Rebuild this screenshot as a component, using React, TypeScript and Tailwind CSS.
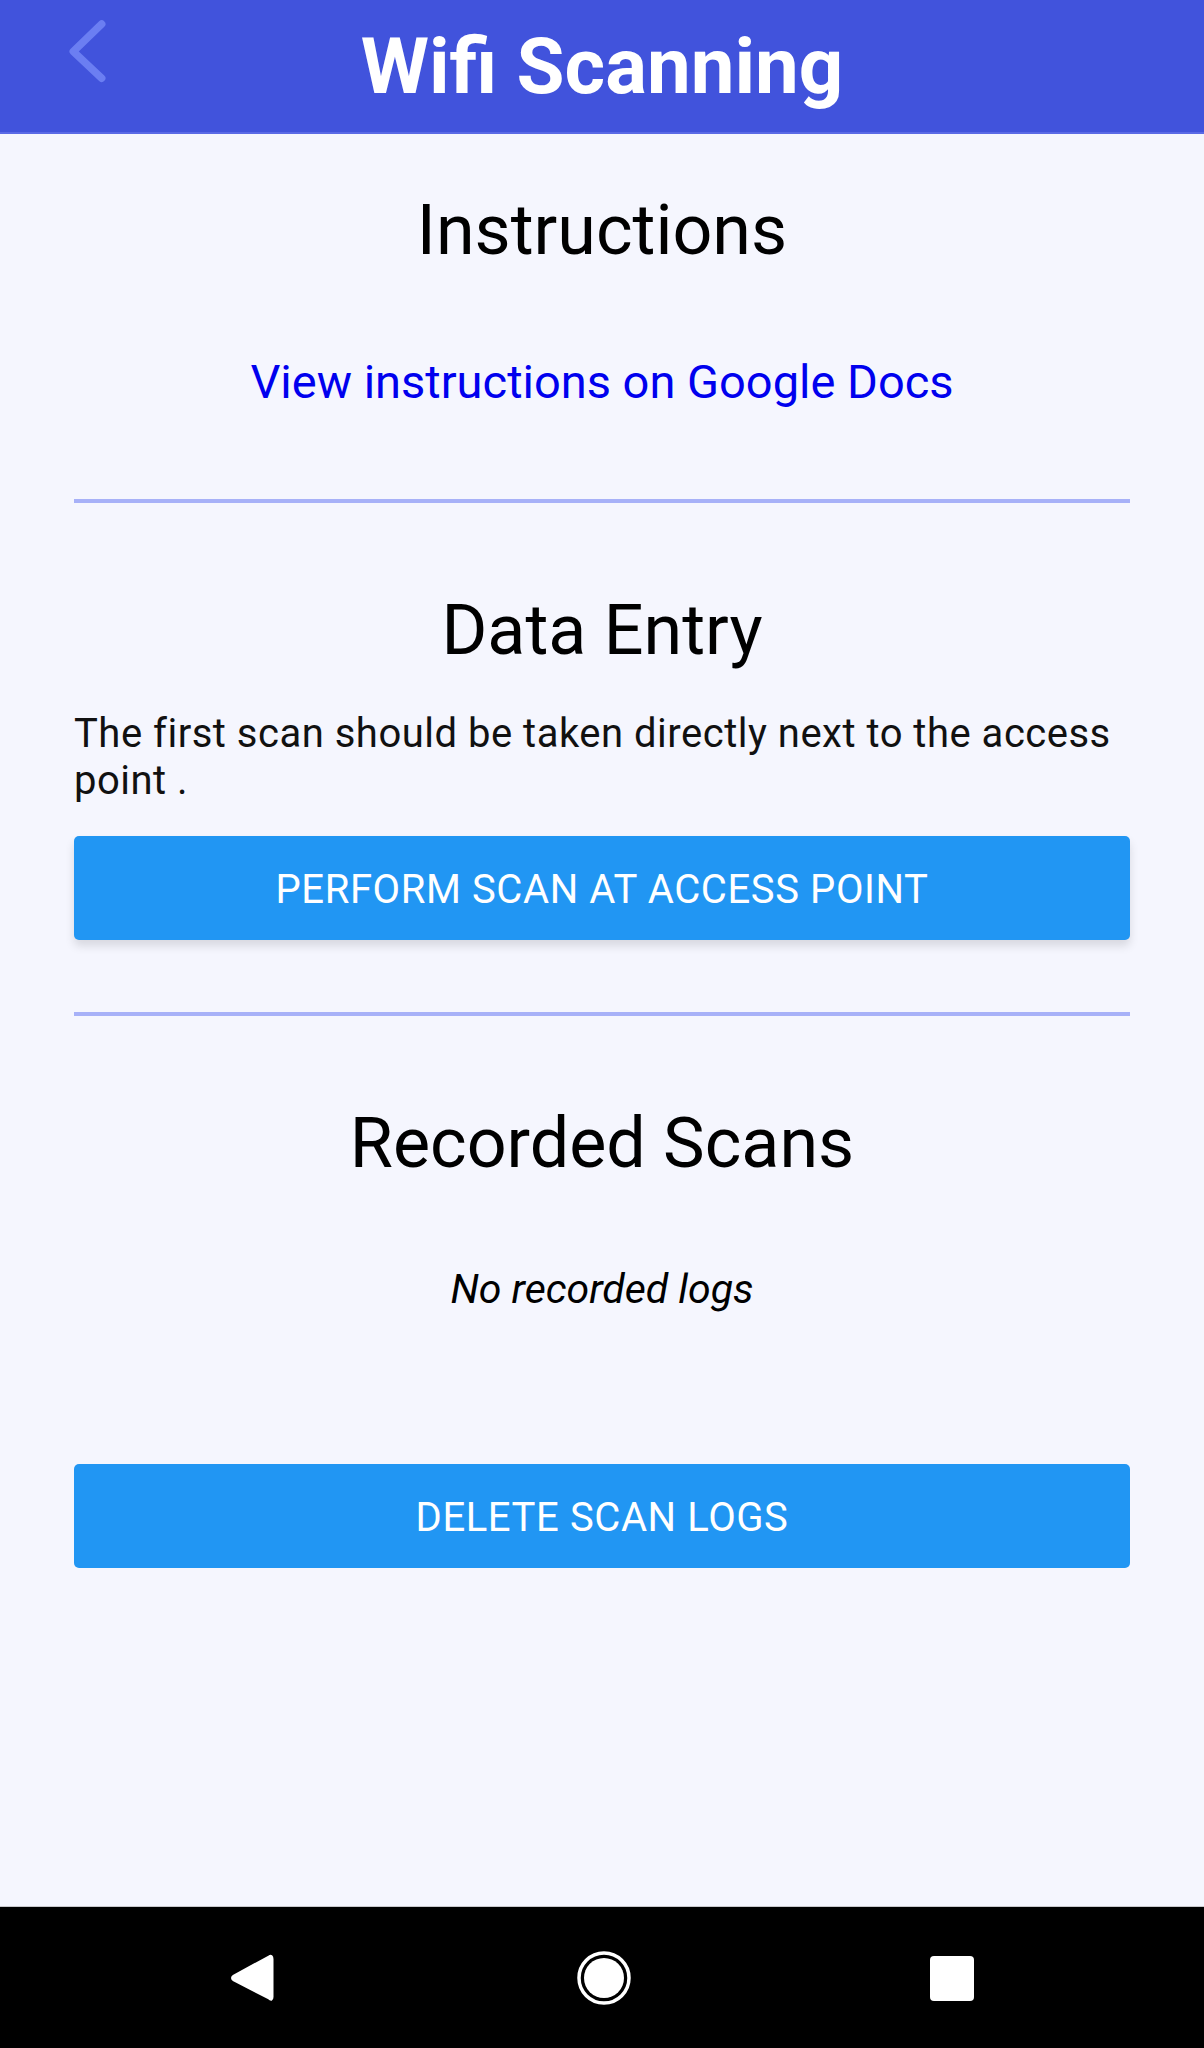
import React from "react";

export default function App() {
  return (
    <div className="flex h-[2048px] w-[1204px] flex-col bg-[#f5f6fe] font-['Roboto',sans-serif] text-black">
      {/* Header */}
      <header className="relative flex h-[134px] shrink-0 items-center justify-center bg-[#4153dc] border-b-2 border-[#5a6ae6]">
        <svg
          className="absolute left-[60px] top-[14px]"
          width="56"
          height="76"
          viewBox="60 14 56 76"
          fill="none"
        >
          <path
            d="M101.7 24 L73.3 51.5 L101.7 78.3"
            stroke="#6b7ef2"
            strokeWidth="7.5"
            strokeLinecap="round"
            strokeLinejoin="round"
          />
        </svg>
        <h1 className="text-[78px] leading-[78px] font-bold text-white mt-[2px]">
          Wifi Scanning
        </h1>
      </header>

      {/* Content */}
      <main className="flex flex-1 flex-col px-[74px]">
        <h2 className="mt-[56px] text-center text-[70px] leading-[80px] font-normal">Instructions</h2>
        <a className="mt-[84px] block text-center text-[47px] leading-[56px] text-[#0000ee]">
          View instructions on Google Docs
        </a>
        <div className="mt-[89px] h-[4px] bg-[#a7b1f8]" />

        <h2 className="mt-[87px] text-center text-[70px] leading-[80px] font-normal">Data Entry</h2>
        <p className="mt-[40px] text-[40px] leading-[47px] tracking-[0.5px] text-[#111]">
          The first scan should be taken directly next to the access point .
        </p>
        <button className="mt-[32px] flex h-[104px] w-full items-center justify-center rounded-[5px] bg-[#2196f3] pt-[4px] text-[40px] tracking-[0.6px] font-normal uppercase text-white shadow-[0_6px_10px_rgba(0,0,0,0.12)]">
          PERFORM SCAN AT ACCESS POINT
        </button>
        <div className="mt-[72px] h-[4px] bg-[#a7b1f8]" />

        <h2 className="mt-[87px] text-center text-[70px] leading-[80px] font-normal">Recorded Scans</h2>
        <p className="mt-[82px] text-center text-[41px] leading-[48px] italic">No recorded logs</p>
        <button className="mt-[151px] flex h-[104px] w-full items-center justify-center rounded-[5px] bg-[#2196f3] pt-[4px] text-[40px] tracking-[0.6px] font-normal uppercase text-white">
          DELETE SCAN LOGS
        </button>
      </main>

      {/* Android nav bar */}
      <nav className="relative h-[142px] shrink-0 bg-black border-t border-[#c8c8cc]">
        <svg className="absolute left-0 top-0" width="1204" height="142" viewBox="0 1906 1204 142">
          <path
            d="M269 1956 Q272 1954 272 1958 L272 1996 Q272 2000 269 1997 L234 1979 Q231 1977 234 1975 Z"
            fill="#fff"
            stroke="#fff"
            strokeWidth="3"
            strokeLinejoin="round"
          />
          <circle cx="604" cy="1977" r="25" fill="none" stroke="#fff" strokeWidth="3.5" />
          <circle cx="604" cy="1977" r="20" fill="#fff" />
          <rect x="930" y="1955" width="44" height="45" rx="4" fill="#fff" />
        </svg>
      </nav>
    </div>
  );
}
